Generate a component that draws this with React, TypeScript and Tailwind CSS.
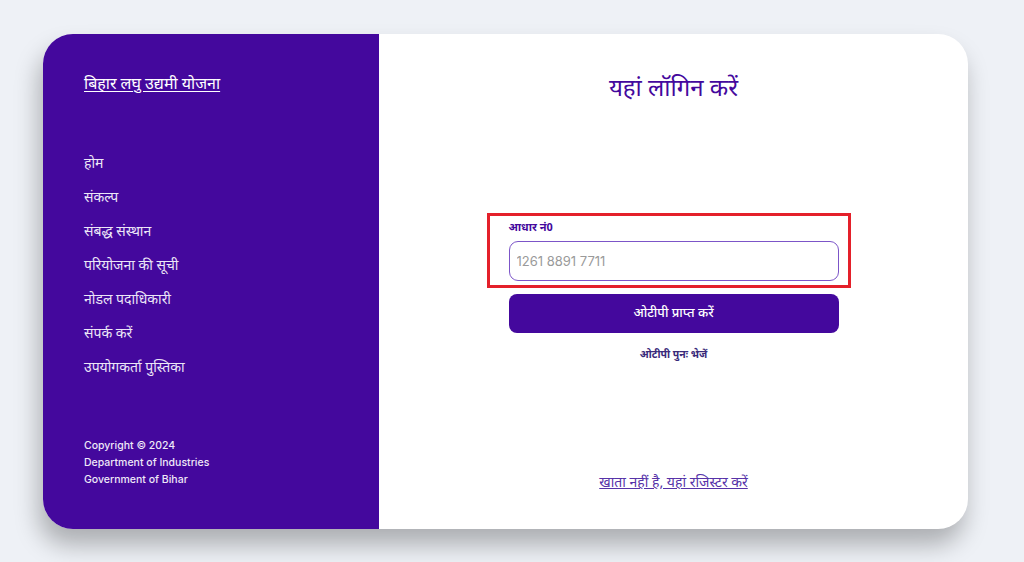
import React from 'react';

const navItems = ['होम', 'संकल्प', 'संबद्ध संस्थान', 'परियोजना की सूची', 'नोडल पदाधिकारी', 'संपर्क करें', 'उपयोगकर्ता पुस्तिका'];

const font = { fontFamily: '"Noto Sans Devanagari", "Noto Sans", Inter, sans-serif' };

export default function App() {
	return (
		<div className="w-[1024px] h-[562px] bg-[#eef1f6] pl-[43px] pt-[34px] overflow-hidden" style={font}>
			<div className="flex w-[925px] h-[495px] rounded-[30px] bg-white overflow-hidden shadow-[-4px_16px_24px_rgba(0,0,0,0.28)]">
				<aside className="w-[336px] bg-[#44089d] text-white flex flex-col pl-[41px] pt-[40px]">
					<a className="text-[16px] underline underline-offset-2 leading-[24px] w-fit">बिहार लघु उद्यमी योजना</a>
					<nav className="mt-[56px] flex flex-col gap-[13px]">
						{navItems.map((n) => (
							<a key={n} className="text-[14px] leading-[21px] text-[#ece6f7]">
								{n}
							</a>
						))}
					</nav>
					<div className="mt-[58px] flex flex-col text-[10.5px] leading-[17px] font-medium text-[#efe9f8]" style={{ fontFamily: 'Inter, "Open Sans", sans-serif' }}>
						<span>Copyright © 2024</span>
						<span>Department of Industries</span>
						<span>Government of Bihar</span>
					</div>
				</aside>
				<main className="flex-1 flex flex-col items-center pt-[40px]">
					<h1 className="text-[24px] leading-[32px] text-[#44089d]">यहां लॉगिन करें</h1>
					<div className="mt-[107px] w-[330px] flex flex-col">
						<div className="-ml-[22px] -mr-[12px] border-[3px] border-[#e4202a] pl-[19px] pr-[9px] pt-[4px] pb-[4px]">
							<label className="block text-[11px] font-bold leading-[16px] text-[#44089d]">आधार नं0</label>
							<input
								placeholder="1261 8891 7711"
								className="mt-[5px] w-full h-[40px] rounded-[9px] border border-[#7c55c8] px-[7px] text-[13px] placeholder:text-[#9a9a9a] outline-none"
								style={{ fontFamily: 'Inter, sans-serif' }}
							/>
						</div>
						<button className="mt-[6px] w-[330px] h-[39px] rounded-[8px] bg-[#44089d] text-white text-[13px] font-medium">ओटीपी प्राप्त करें</button>
					</div>
					<p className="mt-[15px] text-[10.5px] font-bold text-[#3a2a7a]">ओटीपी पुनः भेजें</p>
					<a className="mt-auto mb-[35px] text-[14px] underline text-[#5632a8]">खाता नहीं है, यहां रजिस्टर करें</a>
				</main>
			</div>
		</div>
	);
}
